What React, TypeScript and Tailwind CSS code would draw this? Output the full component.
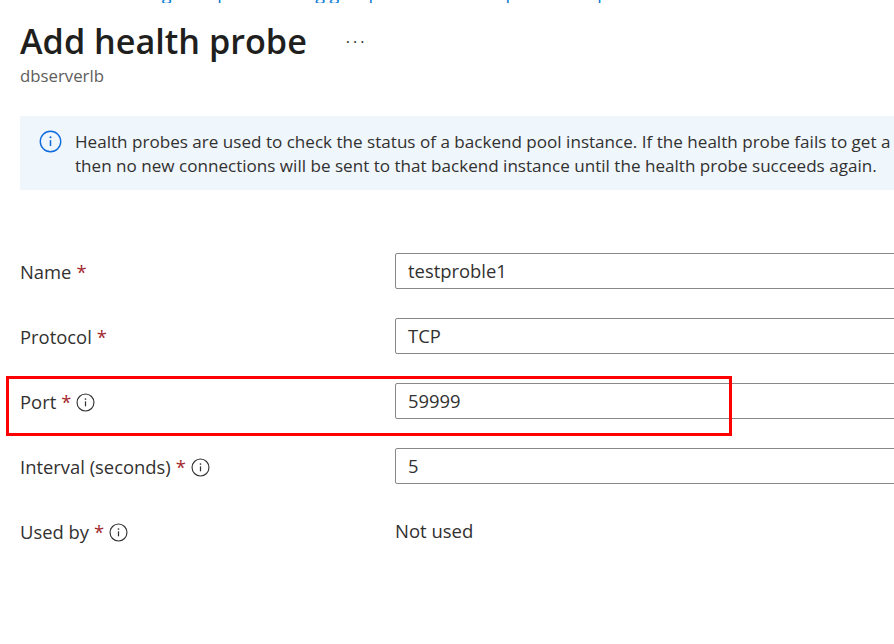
const FONT = "font-['Open_Sans','Noto_Sans',sans-serif]"

function InfoIcon({ className }: { className: string }) {
  return (
    <svg viewBox="0 0 20 20" fill="none" stroke="currentColor" className={className}>
      <circle cx="10" cy="10" r="8.9" strokeWidth="1.2" />
      <path d="M10 8.8v5.2" strokeWidth="1.3" />
      <circle cx="10" cy="6.3" r="0.9" fill="currentColor" stroke="none" />
    </svg>
  )
}

function Label({ text, info }: { text: string; info?: boolean }) {
  return (
    <div className="w-[375px] shrink-0 mt-[2px] flex items-center text-[18.4px] text-[#323130]">
      <span>{text}</span>
      <span className="ml-[5px] text-[#a4262c]">*</span>
      {info && <InfoIcon className="ml-[5px] mt-[1px] w-[19px] h-[19px] text-[#323130]" />}
    </div>
  )
}

function Field({ label, value, info }: { label: string; value: string; info?: boolean }) {
  return (
    <div className="flex items-center h-[36px] mb-[29px]">
      <Label text={label} info={info} />
      <div className="w-[600px] shrink-0 h-[36px] flex items-center pl-[12px] border border-[#8a8886] rounded-[2px] text-[18.4px] text-[#323130]">
        {value}
      </div>
    </div>
  )
}

export default function App() {
  return (
    <div className={`relative w-[894px] h-[644px] overflow-hidden bg-white ${FONT}`}>
      {/* breadcrumb, cut off by the top of the screenshot */}
      <div className="h-[3px] overflow-hidden pl-[20px]">
        <div className="-mt-[19px] text-[18px] leading-[24px] text-[#0078d4] whitespace-nowrap">
          Learn about using load pool with log group for this server probe and port
        </div>
      </div>

      <div className="pl-[20px]">
        <div className="flex items-center mt-[17px] h-[42px]">
          <h1 className="text-[34.2px] leading-[42px] font-semibold text-[#201f1e]">Add health probe</h1>
          <span className="ml-[39px] mt-[1px] text-[16px] leading-none tracking-[3px] text-[#323130]">···</span>
        </div>
        <div className="mt-[3px] text-[16.8px] leading-[22px] text-[#605e5c]">dbserverlb</div>

        <div className="mt-[29px] h-[74px] flex bg-[#eff6fc] pl-[19px] pt-[14px] w-[900px]">
          <InfoIcon className="w-[23px] h-[23px] shrink-0 text-[#0f6cde]" />
          <p className="ml-[13px] text-[17.08px] leading-[24px] text-[#323130] whitespace-nowrap">
            Health probes are used to check the status of a backend pool instance. If the health probe fails to get a
            <br />
            then no new connections will be sent to that backend instance until the health probe succeeds again.
          </p>
        </div>

        <div className="mt-[63px]">
          <Field label="Name" value="testproble1" />
          <Field label="Protocol" value="TCP" />
          <Field label="Port" value="59999" info />
          <Field label="Interval (seconds)" value="5" info />
          <div className="flex items-center h-[36px]">
            <Label text="Used by" info />
            <span className="text-[18.5px] text-[#323130]">Not used</span>
          </div>
        </div>
      </div>

      {/* red annotation drawn over the screenshot */}
      <div className="absolute left-[6px] top-[376px] w-[726px] h-[60px] border-[3px] border-[#ff0000]" />
    </div>
  )
}
